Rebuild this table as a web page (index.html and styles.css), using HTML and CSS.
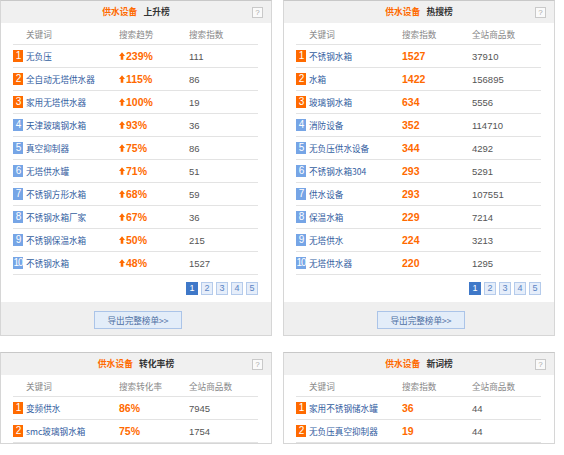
FILE: index.html
```html
<!DOCTYPE html>
<html lang="zh-CN">
<head>
<meta charset="utf-8">
<title>供水设备 榜单</title>
<link rel="stylesheet" href="styles.css">
</head>
<body>
<div class="board">

  <section class="panel">
    <div class="panel-head"><span class="cat">供水设备</span><span class="name">上升榜</span><span class="help">?</span></div>
    <div class="list">
      <div class="row row-head"><span class="c1">关键词</span><span>搜索趋势</span><span>搜索指数</span></div>
      <div class="row"><span class="c1"><i class="rank hot">1</i><a>无负压</a></span><span class="val"><svg class="up" viewBox="0 0 7 9"><path d="M3.5 0L7 4.5H5V9H2V4.5H0Z"/></svg>239%</span><span class="num">111</span></div>
      <div class="row"><span class="c1"><i class="rank hot">2</i><a>全自动无塔供水器</a></span><span class="val"><svg class="up" viewBox="0 0 7 9"><path d="M3.5 0L7 4.5H5V9H2V4.5H0Z"/></svg>115%</span><span class="num">86</span></div>
      <div class="row"><span class="c1"><i class="rank hot">3</i><a>家用无塔供水器</a></span><span class="val"><svg class="up" viewBox="0 0 7 9"><path d="M3.5 0L7 4.5H5V9H2V4.5H0Z"/></svg>100%</span><span class="num">19</span></div>
      <div class="row"><span class="c1"><i class="rank">4</i><a>天津玻璃钢水箱</a></span><span class="val"><svg class="up" viewBox="0 0 7 9"><path d="M3.5 0L7 4.5H5V9H2V4.5H0Z"/></svg>93%</span><span class="num">36</span></div>
      <div class="row"><span class="c1"><i class="rank">5</i><a>真空抑制器</a></span><span class="val"><svg class="up" viewBox="0 0 7 9"><path d="M3.5 0L7 4.5H5V9H2V4.5H0Z"/></svg>75%</span><span class="num">86</span></div>
      <div class="row"><span class="c1"><i class="rank">6</i><a>无塔供水罐</a></span><span class="val"><svg class="up" viewBox="0 0 7 9"><path d="M3.5 0L7 4.5H5V9H2V4.5H0Z"/></svg>71%</span><span class="num">51</span></div>
      <div class="row"><span class="c1"><i class="rank">7</i><a>不锈钢方形水箱</a></span><span class="val"><svg class="up" viewBox="0 0 7 9"><path d="M3.5 0L7 4.5H5V9H2V4.5H0Z"/></svg>68%</span><span class="num">59</span></div>
      <div class="row"><span class="c1"><i class="rank">8</i><a>不锈钢水箱厂家</a></span><span class="val"><svg class="up" viewBox="0 0 7 9"><path d="M3.5 0L7 4.5H5V9H2V4.5H0Z"/></svg>67%</span><span class="num">36</span></div>
      <div class="row"><span class="c1"><i class="rank">9</i><a>不锈钢保温水箱</a></span><span class="val"><svg class="up" viewBox="0 0 7 9"><path d="M3.5 0L7 4.5H5V9H2V4.5H0Z"/></svg>50%</span><span class="num">215</span></div>
      <div class="row"><span class="c1"><i class="rank">10</i><a>不锈钢水箱</a></span><span class="val"><svg class="up" viewBox="0 0 7 9"><path d="M3.5 0L7 4.5H5V9H2V4.5H0Z"/></svg>48%</span><span class="num">1527</span></div>
    </div>
    <div class="pager"><span class="pg on">1</span><span class="pg">2</span><span class="pg">3</span><span class="pg">4</span><span class="pg">5</span></div>
    <div class="foot"><span class="btn">导出完整榜单&gt;&gt;</span></div>
  </section>

  <section class="panel">
    <div class="panel-head"><span class="cat">供水设备</span><span class="name">热搜榜</span><span class="help">?</span></div>
    <div class="list">
      <div class="row row-head"><span class="c1">关键词</span><span>搜索指数</span><span>全站商品数</span></div>
      <div class="row"><span class="c1"><i class="rank hot">1</i><a>不锈钢水箱</a></span><span class="val">1527</span><span class="num">37910</span></div>
      <div class="row"><span class="c1"><i class="rank hot">2</i><a>水箱</a></span><span class="val">1422</span><span class="num">156895</span></div>
      <div class="row"><span class="c1"><i class="rank hot">3</i><a>玻璃钢水箱</a></span><span class="val">634</span><span class="num">5556</span></div>
      <div class="row"><span class="c1"><i class="rank">4</i><a>消防设备</a></span><span class="val">352</span><span class="num">114710</span></div>
      <div class="row"><span class="c1"><i class="rank">5</i><a>无负压供水设备</a></span><span class="val">344</span><span class="num">4292</span></div>
      <div class="row"><span class="c1"><i class="rank">6</i><a>不锈钢水箱304</a></span><span class="val">293</span><span class="num">5291</span></div>
      <div class="row"><span class="c1"><i class="rank">7</i><a>供水设备</a></span><span class="val">293</span><span class="num">107551</span></div>
      <div class="row"><span class="c1"><i class="rank">8</i><a>保温水箱</a></span><span class="val">229</span><span class="num">7214</span></div>
      <div class="row"><span class="c1"><i class="rank">9</i><a>无塔供水</a></span><span class="val">224</span><span class="num">3213</span></div>
      <div class="row"><span class="c1"><i class="rank">10</i><a>无塔供水器</a></span><span class="val">220</span><span class="num">1295</span></div>
    </div>
    <div class="pager"><span class="pg on">1</span><span class="pg">2</span><span class="pg">3</span><span class="pg">4</span><span class="pg">5</span></div>
    <div class="foot"><span class="btn">导出完整榜单&gt;&gt;</span></div>
  </section>

  <section class="panel">
    <div class="panel-head"><span class="cat">供水设备</span><span class="name">转化率榜</span><span class="help">?</span></div>
    <div class="list">
      <div class="row row-head"><span class="c1">关键词</span><span>搜索转化率</span><span>全站商品数</span></div>
      <div class="row"><span class="c1"><i class="rank hot">1</i><a>变频供水</a></span><span class="val">86%</span><span class="num">7945</span></div>
      <div class="row"><span class="c1"><i class="rank hot">2</i><a>smc玻璃钢水箱</a></span><span class="val">75%</span><span class="num">1754</span></div>
    </div>
  </section>

  <section class="panel">
    <div class="panel-head"><span class="cat">供水设备</span><span class="name">新词榜</span><span class="help">?</span></div>
    <div class="list">
      <div class="row row-head"><span class="c1">关键词</span><span>搜索指数</span><span>全站商品数</span></div>
      <div class="row"><span class="c1"><i class="rank hot">1</i><a>家用不锈钢储水罐</a></span><span class="val">36</span><span class="num">44</span></div>
      <div class="row"><span class="c1"><i class="rank hot">2</i><a>无负压真空抑制器</a></span><span class="val">19</span><span class="num">44</span></div>
    </div>
  </section>

</div>
</body>
</html>
```

FILE: styles.css
```css
html, body {
  margin: 0;
  padding: 0;
  background: #fff;
}

body {
  font-family: "Noto Sans CJK SC", "Liberation Sans", sans-serif;
  font-size: 8.6px;
  color: #555;
}

.board {
  display: grid;
  grid-template-columns: 272px 272px;
  column-gap: 11px;
  row-gap: 16px;
  align-items: start;
}

.panel {
  border: 1px solid #d6d6d6;
  border-top-color: #c8c8c8;
  background: #fff;
}

.panel-head {
  position: relative;
  height: 22px;
  line-height: 22px;
  background: #f0f0f0;
  text-align: center;
  font-weight: bold;
  font-size: 8.8px;
}

.panel-head .cat {
  color: #ff6a00;
  margin-right: 6px;
}

.panel-head .name {
  color: #333;
}

.help {
  position: absolute;
  right: 8px;
  top: 6px;
  width: 9px;
  height: 9px;
  border: 1px solid #c9c9c9;
  background: #fafafa;
  color: #aaa;
  font-size: 8px;
  line-height: 9px;
  font-weight: normal;
  text-align: center;
  font-family: "Liberation Sans", sans-serif;
}

.list {
  padding: 0 13px 0 12px;
}

.row {
  display: grid;
  grid-template-columns: 106px 70px 1fr;
  align-items: center;
  height: 22px;
  border-bottom: 1px solid #e3e3e3;
  white-space: nowrap;
}

.row-head {
  height: 21px;
  color: #888;
}

.row-head .c1 {
  padding-left: 13px;
}

.c1 {
  display: flex;
  align-items: center;
}

.rank {
  display: inline-block;
  width: 10px;
  height: 12px;
  margin-right: 3px;
  background: #76a5e6;
  color: #fff;
  font-style: normal;
  font-size: 10px;
  line-height: 12px;
  text-align: center;
  font-family: "Liberation Sans", sans-serif;
  letter-spacing: -1px;
}

.rank.hot {
  background: #ff6a00;
}

.c1 a {
  color: #33609f;
}

.val {
  color: #ff6a00;
  font-weight: bold;
  font-family: "Liberation Sans", sans-serif;
  font-size: 10.5px;
  display: flex;
  align-items: center;
}

.up {
  width: 6px;
  height: 8px;
  fill: #ff6a00;
  margin-right: 1px;
}

.num {
  color: #555;
  font-family: "Liberation Sans", sans-serif;
  font-size: 9.5px;
}

.pager {
  display: flex;
  justify-content: flex-end;
  gap: 3px;
  padding: 7px 13px 7px 0;
  height: 13px;
}

.pg {
  width: 10px;
  height: 11px;
  border: 1px solid #b5cbeb;
  background: #e6eefa;
  color: #5b84c4;
  font-size: 9px;
  line-height: 11px;
  text-align: center;
  font-family: "Liberation Sans", sans-serif;
}

.pg.on {
  background: #3f78c8;
  border-color: #3f78c8;
  color: #fff;
}

.foot {
  height: 33px;
  background: #efefef;
  display: flex;
  justify-content: center;
  align-items: flex-start;
}

.btn {
  margin-top: 9px;
  margin-left: 4px;
  width: 86px;
  height: 16px;
  line-height: 16px;
  border: 1px solid #abc4e8;
  background: #e3edf9;
  color: #4d6fa3;
  font-size: 8.6px;
  text-align: center;
}
```
